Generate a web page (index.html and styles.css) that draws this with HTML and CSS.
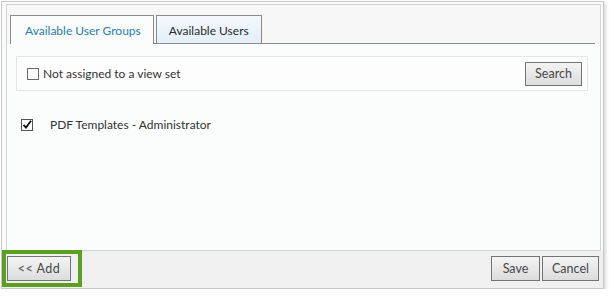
FILE: index.html
```html
<!DOCTYPE html>
<html lang="en">
<head>
    <meta charset="UTF-8">
    <title>Select User Groups</title>
    <link rel="stylesheet" href="styles.css">
</head>
<body>
    <div class="dialog">
        <div class="panel">
            <!-- Tabs -->
            <div class="tab-head">
                <div class="tab-list">
                    <div class="tab active">Available User Groups</div>
                    <div class="tab">Available Users</div>
                </div>
            </div>

            <div class="tab-body">
                <div class="filter-box">
                    <label class="check-label">
                        <span class="checkbox"></span>
                        Not assigned to a view set
                    </label>
                    <button class="btn btn-search">Search</button>
                </div>

                <div class="group-list">
                    <div class="group-item">
                        <span class="checkbox checked">
                            <svg width="12" height="12" viewBox="0 0 12 12">
                                <path d="M2.5 5.8 L5 8.6 L10 1.8" fill="none" stroke="#111" stroke-width="1.8"/>
                            </svg>
                        </span>
                        <span class="group-name">PDF Templates - Administrator</span>
                    </div>
                </div>
            </div>
        </div>

        <div class="footer">
            <span class="highlight"></span>
            <button class="btn btn-add">&lt;&lt; Add</button>
            <div class="footer-right">
                <button class="btn btn-save">Save</button>
                <button class="btn btn-cancel">Cancel</button>
            </div>
        </div>
    </div>
</body>
</html>
```

FILE: styles.css
```css
* {
    margin: 0;
    padding: 0;
    box-sizing: border-box;
}

body {
    background-color: #ffffff;
    font-family: Lato, "Noto Sans", sans-serif;
    font-size: 12px;
    color: #333;
}

/* Dialog frame */
.dialog {
    margin: 1px 0 0 1px;
    width: 603px;
    height: 288px;
    border: 1px solid #c8c8c8;
    background-color: #fafafa;
    box-shadow: 2px 2px 3px rgba(0, 0, 0, 0.15);
    display: flex;
    flex-direction: column;
}

.panel {
    flex: 1;
    margin: 2px 2px 0 4px;
    border: 1px solid #d2d2d2;
    display: flex;
    flex-direction: column;
}

/* Tabs */
.tab-head {
    background-color: #f7f7f7;
    padding: 10px 5px 0 3px;
}
.tab-list {
    display: flex;
    align-items: flex-end;
    gap: 2px;
    border-bottom: 1px solid #8a8a8a;
}
.tab {
    height: 28px;
    line-height: 29px;
    padding: 0 12px;
    border: 1px solid #8a8a8a;
    border-bottom: none;
    background: linear-gradient(#f3f8fd, #e4eff9);
    color: #2b2b2b;
    white-space: nowrap;
}
.tab.active {
    height: 29px;
    margin-bottom: -1px;
    padding: 0 12px 0 14px;
    background: #fbfcfc;
    color: #2a7db5;
}

.tab-body {
    flex: 1;
    background-color: #fbfcfc;
    padding: 12px 12px 0 9px;
}

.filter-box {
    height: 35px;
    border: 1px solid #e5e5e5;
    background-color: #fdfdfd;
    display: flex;
    align-items: center;
    justify-content: space-between;
    padding: 0 5px 0 10px;
}

.check-label {
    display: flex;
    align-items: center;
    gap: 4px;
    color: #333;
}

.checkbox {
    width: 12px;
    height: 12px;
    border: 1px solid #6a6a6a;
    background-color: #fff;
    display: inline-block;
    position: relative;
    flex-shrink: 0;
}
.checkbox.checked {
    border-color: #555;
}
.checkbox svg {
    position: absolute;
    left: -1px;
    top: -1px;
}

.group-list {
    margin-top: 26px;
    padding-left: 5px;
}
.group-item {
    display: flex;
    align-items: center;
    gap: 17px;
}
.group-name {
    color: #333;
}

/* Buttons */
.btn {
    height: 25px;
    padding: 0;
    border: 1px solid #747474;
    background: linear-gradient(#f4f4f4, #dcdcdc);
    color: #484848;
    font-family: inherit;
    font-size: 12.5px;
    white-space: nowrap;
    cursor: pointer;
}
.btn:hover {
    background: linear-gradient(#fafafa, #e6e6e6);
}
.btn-search {
    width: 57px;
    height: 24px;
}

.footer {
    position: relative;
    height: 37px;
    background-color: #f0f0f0;
    display: flex;
    align-items: flex-start;
    justify-content: space-between;
    padding: 5px 4px 0 5px;
}
.footer-right {
    display: flex;
    gap: 2px;
}
.btn-add {
    width: 64px;
    letter-spacing: 0.5px;
}
.btn-save {
    width: 49px;
}
.btn-cancel {
    width: 57px;
}

/* Green callout around the Add button */
.highlight {
    position: absolute;
    left: 0;
    top: -1px;
    width: 80px;
    height: 37px;
    border: 4px solid #5c9f20;
    pointer-events: none;
}
```
